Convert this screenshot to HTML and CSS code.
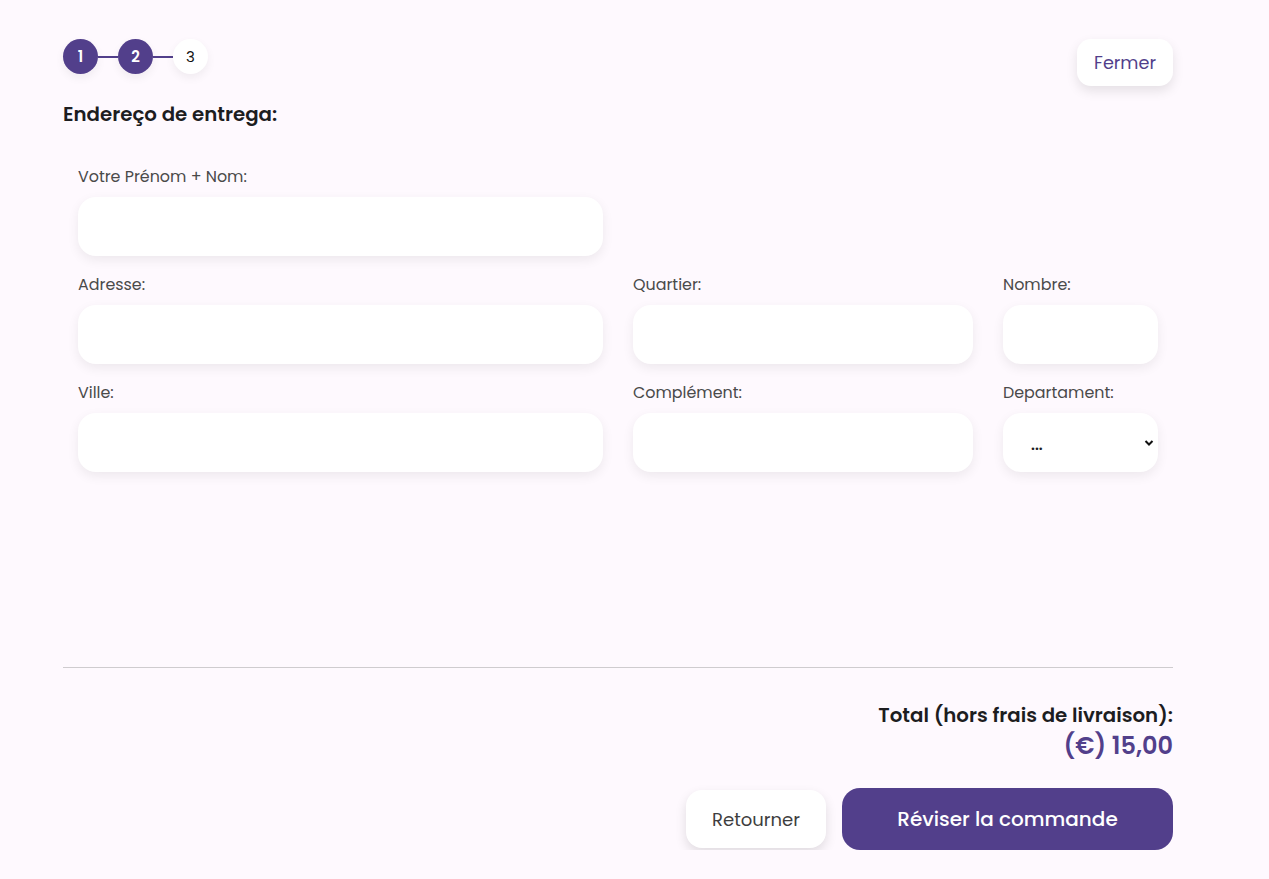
FILE: index.html
```html
<!DOCTYPE html>
<html lang="fr">
<head>
<meta charset="utf-8">
<title>Commande</title>
<link rel="stylesheet" href="styles.css">
</head>
<body>
<div class="page">
  <div class="top">
    <div class="steps">
      <span class="step done">1</span>
      <span class="link"></span>
      <span class="step done">2</span>
      <span class="link"></span>
      <span class="step">3</span>
    </div>
    <button class="btn-close">Fermer</button>
  </div>
  <h2 class="title">Endereço de entrega:</h2>
  <form class="form">
    <div class="row">
      <div class="field c6"><label>Votre Prénom + Nom:</label><input type="text"></div>
    </div>
    <div class="row">
      <div class="field c6"><label>Adresse:</label><input type="text"></div>
      <div class="field c4"><label>Quartier:</label><input type="text"></div>
      <div class="field c2"><label>Nombre:</label><input type="text"></div>
    </div>
    <div class="row">
      <div class="field c6"><label>Ville:</label><input type="text"></div>
      <div class="field c4"><label>Complément:</label><input type="text"></div>
      <div class="field c2"><label>Departament:</label>
        <div class="select"><span>...</span>
          <svg width="10" height="8" viewBox="0 0 10 8"><path d="M1.5 2 L5 5.5 L8.5 2" fill="none" stroke="#111" stroke-width="2"/></svg>
        </div>
      </div>
    </div>
  </form>
  <hr class="sep">
  <div class="total">
    <div class="total-label">Total (hors frais de livraison):</div>
    <div class="total-price">(€) 15,00</div>
  </div>
  <div class="actions">
    <button class="btn-back">Retourner</button>
    <button class="btn-main">Réviser la commande</button>
  </div>
</div>
</body>
</html>
```
FILE: styles.css
```css
* { box-sizing: border-box; }
html, body { margin: 0; padding: 0; }
body {
  background: #fef9fe;
  font-family: "Poppins", "Inter", "Noto Sans", sans-serif;
  color: #1d1d1f;
}
.page {
  width: 1110px;
  margin-left: 63px;
  padding-top: 39px;
}
.top {
  display: flex;
  justify-content: space-between;
  align-items: flex-start;
}
.steps {
  display: flex;
  align-items: center;
}
.step {
  width: 35px;
  height: 35px;
  border-radius: 50%;
  background: #fff;
  color: #111;
  font-size: 15px;
  display: flex;
  align-items: center;
  justify-content: center;
  box-shadow: 0 4px 10px rgba(0,0,0,0.06);
}
.step.done {
  background: #523f8b;
  color: #fff;
  font-weight: 600;
}
.link {
  width: 20px;
  height: 2px;
  background: #523f8b;
}
.btn-close {
  width: 96px;
  height: 47px;
  border: none;
  border-radius: 14px;
  background: #fff;
  color: #523f8b;
  font-family: inherit;
  font-size: 17.6px;
  box-shadow: 0 5px 12px rgba(0,0,0,0.1);
  padding: 0;
}
.title {
  margin: 15px 0 0;
  font-size: 19.8px;
  font-weight: 600;
  line-height: 26px;
}
.form {
  margin-top: 38px;
  padding: 0 15px;
  display: flex;
  flex-direction: column;
  gap: 17px;
}
.row {
  display: flex;
  gap: 30px;
}
.field {
  display: flex;
  flex-direction: column;
}
.c6 { width: 525px; }
.c4 { width: 340px; }
.c2 { width: 155px; }
.field label {
  font-size: 15.9px;
  color: #4a4a4a;
  line-height: 24px;
  margin-bottom: 8px;
}
.field input, .select {
  height: 59px;
  border: none;
  border-radius: 18px;
  background: #fff;
  box-shadow: 0 4px 12px rgba(0,0,0,0.07);
  font-family: inherit;
  font-size: 15px;
  padding: 0 20px;
  outline: none;
}
.select {
  display: flex;
  align-items: center;
  justify-content: space-between;
  padding: 0 4px 0 28px;
  font-size: 15px;
  font-weight: 600;
}
.select span { margin-top: 4px; }
.sep {
  margin: 195px 0 0;
  border: none;
  border-top: 1px solid #cfcccf;
}
.total {
  text-align: right;
  margin-top: 33px;
}
.total-label {
  font-size: 19.8px;
  font-weight: 600;
  line-height: 29px;
}
.total-price {
  font-size: 24px;
  font-weight: 600;
  color: #523f8b;
  line-height: 32px;
}
.actions {
  display: flex;
  justify-content: flex-end;
  align-items: center;
  gap: 16px;
  margin-top: 26px;
}
.btn-back {
  width: 140px;
  height: 58px;
  border: none;
  border-radius: 16px;
  background: #fff;
  color: #3e3e3e;
  font-family: inherit;
  font-size: 18px;
  box-shadow: 0 5px 12px rgba(0,0,0,0.12);
}
.btn-main {
  width: 331px;
  height: 62px;
  border: none;
  border-radius: 18px;
  background: #523f8b;
  color: #fff;
  font-family: inherit;
  font-size: 20px;
  font-weight: 500;
}
```
